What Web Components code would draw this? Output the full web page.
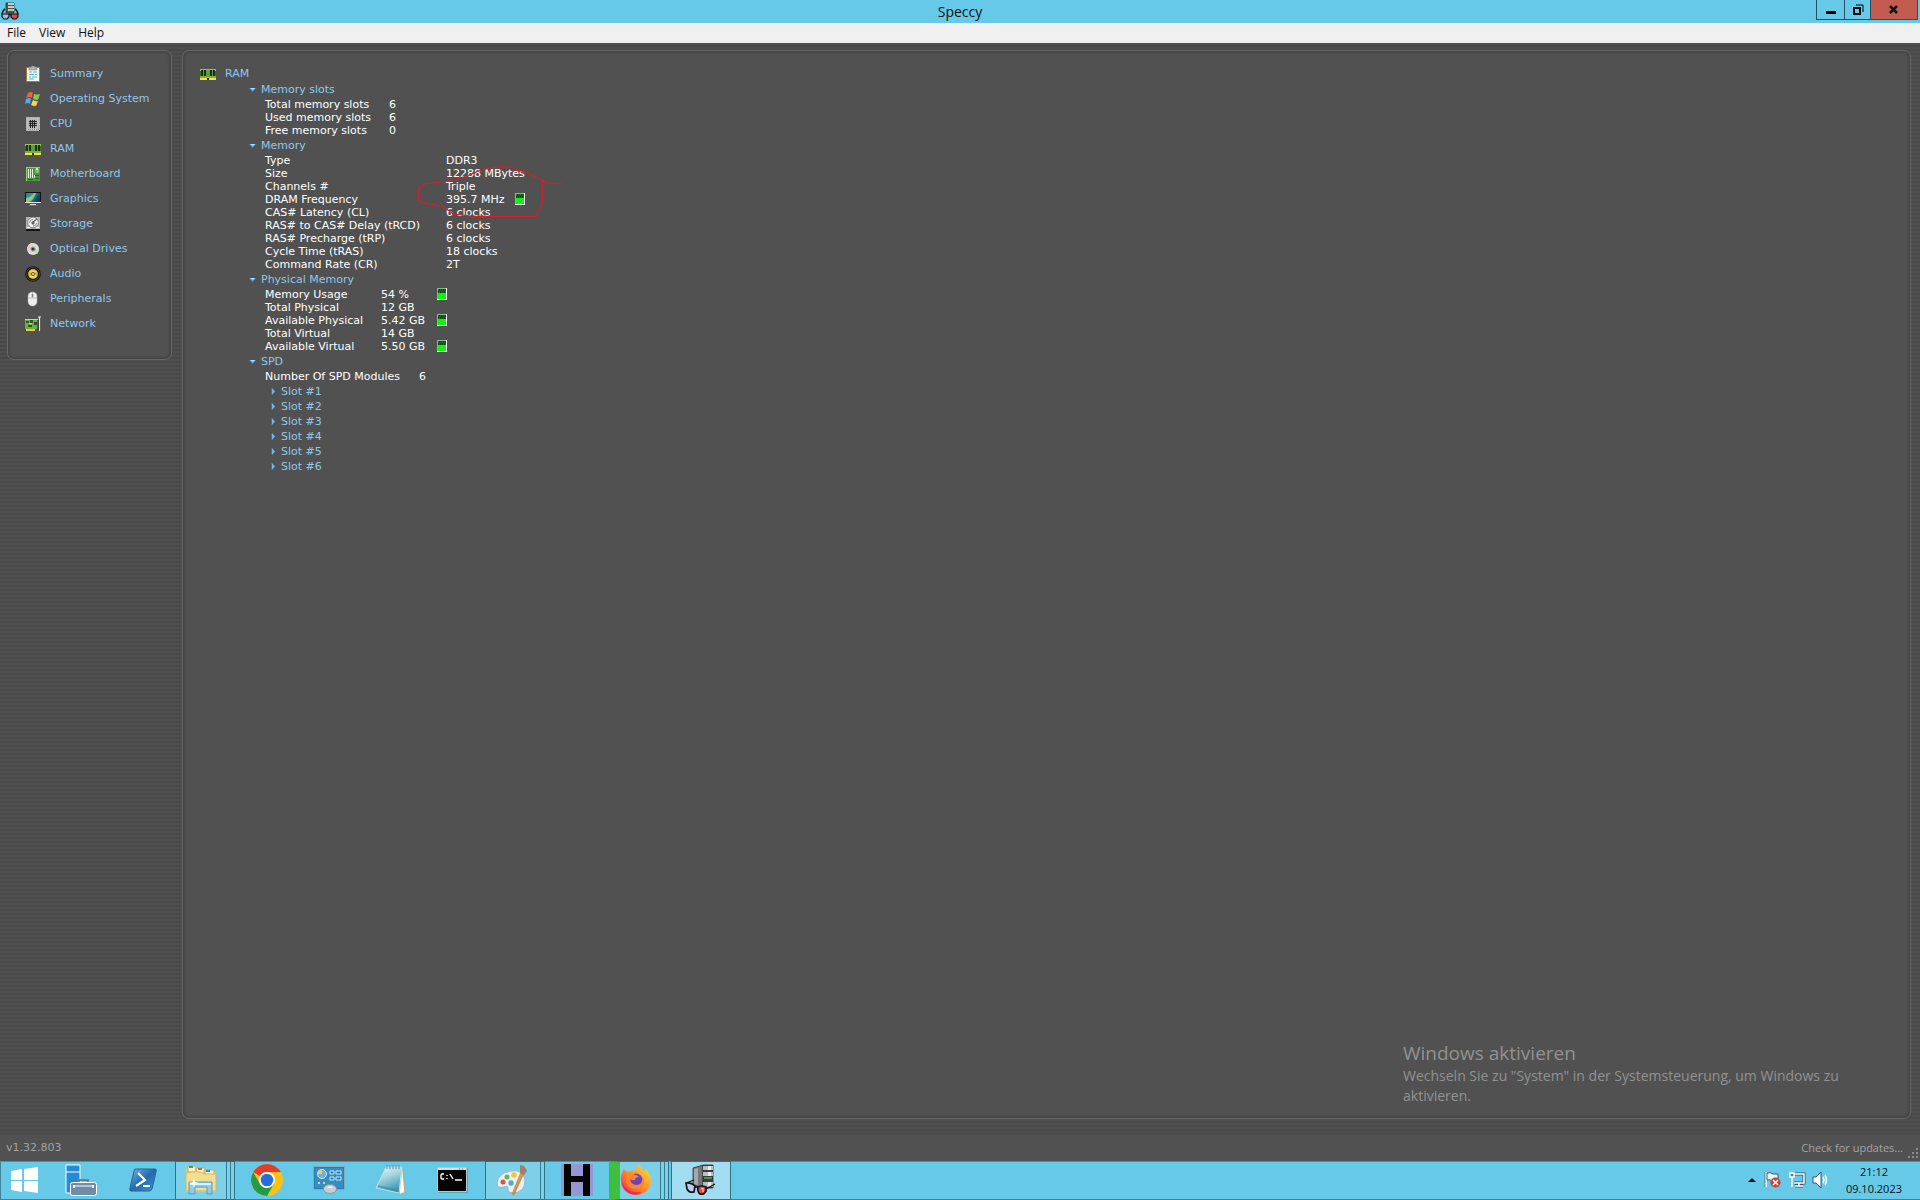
<!DOCTYPE html>
<html lang="en">
<head>
<meta charset="utf-8">
<title>Speccy</title>
<style>
  html, body { height: 100%; margin: 0; }
  body { overflow: hidden; background: #515151; }
</style>
</head>
<body>
<speccy-desktop></speccy-desktop>
<script>
const UI = '"Open Sans", "Noto Sans", sans-serif';
const VERDANA = '"DejaVu Sans", Verdana, sans-serif';

const svg = (w, h, body, vb) => `<svg width="${w}" height="${h}" viewBox="${vb || `0 0 ${w} ${h}`}" aria-hidden="true">${body}</svg>`;

const ICONS = {
  speccy: svg(18, 18, `<path d="M5 1h8v10H5z" fill="#4f5753" stroke="#27302c" stroke-width=".8"/><path d="M7 1h6v2H7zM7 4h6v2H7zM7 7h6v2H7z" fill="#c9d1cb"/><path d="M8 8h4" stroke="#76c276" stroke-width=".8"/><path d="M4 7q-2 1-3 5m13-5q2 1 3 5" stroke="#111" stroke-width="1.400" fill="none"/><path d="M1 12h7v3l-2 2H3l-2-2z" fill="#9fb9e6" stroke="#111" stroke-width="1.200"/><path d="M10 12h7v3l-2 2h-3l-2-2z" fill="#e0483f" stroke="#111" stroke-width="1.200"/><path d="M8 12.500h2" stroke="#111" stroke-width="1.500"/>`),
  speccyBig: svg(34, 32, `<path d="M9 4 19 1v23L9 21z" fill="#73777a" stroke="#2b2e30" stroke-width=".8"/><path d="M10 5 14 4v17l-4-1z" fill="#a5a8aa"/><path d="M19 1h10v23H19z" fill="#3b3e40" stroke="#2b2e30" stroke-width=".8"/><path d="M19 2h10v4H19zM19 8h10v4H19zM19 18h10v5H19z" fill="#b9bdbf"/><path d="M24 2h3v4h-3zM24 8h3v4h-3zM24 18h3v4h-3z" fill="#ececec"/><path d="M20 14h8" stroke="#5cc46a" stroke-width="1.200"/><path d="M2 19 10 16M22 25l9-5" stroke="#151515" stroke-width="1.300" fill="none"/><path d="M2 19q5-1 9 3l-1 6q-5 1-7-3z" fill="#b9cdf2" stroke="#151515" stroke-width="1.700"/><path d="M14 23q4-2 8 0v4q-2 4-6 3-3-2-2-7z" fill="#e24c46" stroke="#151515" stroke-width="1.700"/><path d="M11 23h3" stroke="#151515" stroke-width="1.600"/><path d="m17 25 2-1v4" stroke="#ffd4d0" fill="none"/>`),
  summary: svg(16, 16, `<path d="M1 1h14v15H1z" fill="#b86e43"/><path d="M2 2h12v13H2z" fill="#f8fbfa"/><path d="M4 1h2l1-1h2l1 1h2v3H4z" fill="#aeb3b4" stroke="#777" stroke-width=".5"/><path d="M4 6h3m1 0h4M4 8.500h5m1 0h2M4 11h2m1 0h5M4 13h5" stroke="#45b7c2"/>`),
  os: svg(16, 16, `<path d="M3 2Q6 0 8 2L7 7Q4 5 1 7z" fill="#ea653e"/><path d="M9 3q3 1 6 0l-2 6q-3 1-5-1z" fill="#8ac948"/><path d="M1 8q3-2 5 0l-1 5q-2-2-5 0z" fill="#55a8ec"/><path d="M8 9q3 2 5 1l-2 5q-3 1-5-1z" fill="#fbd84e"/><path d="m8 2-1 5m1 1q3 2 5 1M6 14q3 2 5 1" stroke="#7d3320" stroke-opacity=".45" fill="none"/>`),
  cpu: svg(16, 16, `<path d="M1 1h14v14H1z" fill="#8d8d8d"/><path d="M2 3h12M2 5h12M2 7h12M2 9h12M2 11h12M2 13h12" stroke="#f4f4f4" stroke-width="1" stroke-dasharray="1 1"/><path d="M3 2h12M3 4h12M3 6h12M3 8h12M3 10h12M3 12h12" stroke="#e0e0e0" stroke-width="1" stroke-dasharray="1 1"/><path d="M4 4h8v8H4z" fill="#b4b4b4"/><path d="M5.500 4v8m2-8v8m2-8v8M4 5.500h8M4 7.500h8M4 9.500h8" stroke="#252525"/><path d="M1.500 1.500h13v13h-13z" fill="none" stroke="#b4b4b4"/><path d="M14 14h1v1h-1z" fill="#111"/>`),
  ram: svg(16, 16, `<path d="M0 3h16v11H0z" fill="#3d7026"/><path d="M0 3h16v2H0z" fill="#91c647"/><path d="M1 4h2v6H1zM4 4h2v6H4zM10 4h2v6h-2zM13 4h2v6h-2z" fill="#1e2c1a"/><path d="M3 4h1v6H3zM6 4h4v6H6zM12 4h1v6h-1z" fill="#5f9a44"/><path d="M0 10h16v2H0z" fill="#7cb52d"/><path d="M0 12h16v2H0z" fill="#eee34b"/><path d="M7 12h2v2H7z" fill="#383610"/>`),
  board: svg(16, 16, `<path d="M1 1h14v14H1z" fill="#4d9440"/><path d="M1 1h14v1H1zM1 1h1v14H1z" fill="#9acb7c"/><path d="M3.500 3v9m2-9v9m2-9v9" stroke="#e8f6df"/><path d="M10 3h4v4h-4z" fill="#83bd63"/><path d="M10 9.500h4M10 12.500h4M3 13.500h5" stroke="#25642a"/><path d="M11 2h2v2h-2zM9 9h1v3H9z" fill="#d5ebbd"/>`),
  graphics: svg(16, 16, `<defs><linearGradient id="g" x2="1" y2=".4"><stop stop-color="#237c8e"/><stop offset=".45" stop-color="#2da5a5"/><stop offset=".7" stop-color="#147083"/><stop offset="1" stop-color="#103d67"/></linearGradient></defs><path d="M0 1h16v11H0z" fill="#111"/><path d="M1 2h14v9H1z" fill="url(#g)"/><path d="M1 11V7q5 0 8-5h2Q9 9 4 11z" fill="#cfd96d" opacity=".7"/><path d="M0 11h16v1H0zM5 13h6v1H5z" fill="#e4e4e4"/><path d="M3 14h10v1H3z" fill="#292"/>`),
  storage: svg(16, 16, `<path d="M1 1h14v14H1z" fill="#b5b5b5"/><path d="M1 13h14v2H1z" fill="#151515"/><circle cx="8" cy="6.500" r="5.300" fill="#f2f2f2" stroke="#808080"/><path d="M4.500 7q0-3.500 3.500-3.500M11.500 7q0 3-3.500 3" stroke="#8a8a8a" fill="none"/><circle cx="8" cy="7" r="1.700" fill="#666"/><path d="m8 6 4-3" stroke="#5a5a5a" stroke-width="1.200"/><path d="M2 11h3v1H2zm9 0h3v1h-3z" fill="#f4f4f4"/>`),
  optical: svg(16, 16, `<circle cx="8" cy="8" r="6" fill="#dedede"/><path d="m8 8-6 0a6 6 0 0 1 2-4z" fill="#edc0dc"/><path d="M8 8 4 3.500a6 6 0 0 1 3-1.500z" fill="#dbe69f"/><path d="m8 8 6 1a6 6 0 0 1-2 4z" fill="#b6deb8"/><circle cx="8" cy="8" r="2.700" fill="#aaa"/><circle cx="8" cy="8" r="1.600" fill="#353535"/>`),
  audio: svg(16, 16, `<circle cx="8" cy="8" r="7.800" fill="#171410"/><circle cx="8" cy="8" r="6.500" fill="none" stroke="#6a5827" stroke-width=".7"/><circle cx="8" cy="8" r="5" fill="#cfad3a"/><path d="M4 6a5 5 0 0 1 8 0L9 8H7zM4 10a5 5 0 0 0 8 0L9 8H7z" fill="#eadb73"/><circle cx="8" cy="8" r="2" fill="#68521a"/><circle cx="8" cy="8" r="1" fill="#fff2aa"/>`),
  mouse: svg(16, 16, `<rect x="3" y="1" width="9" height="14" rx="4.500" fill="#f0f0f0" stroke="#b7b7b7" stroke-width=".5"/><path d="M3 7h9M7.500 1v6" stroke="#aaa" stroke-width=".8"/><rect x="6.500" y="3" width="2" height="3" rx="1" fill="#868686"/>`),
  network: svg(16, 16, `<path d="M0 3h13v10H0z" fill="#6ead42"/><path d="M1 5h3v2H1zM5 4h3v3H5zM9 6h3v3H9zM3 9h4v2H3z" fill="#2c5723"/><path d="M0 3h13v1H0zM4 7h3v1H4z" fill="#badf91"/><path d="M1 13h9v2H1z" fill="#e2cb48"/><path d="M13 1h3M14.500 1v14" stroke="#e9e9e9" stroke-width="1.200"/><path d="M13 4v10" stroke="#222"/>`),
  start: svg(28, 26, `<path d="m0 4 11-2v11H0zM13 2l14-2v13H13zM0 14h11v11L0 23zM13 14h14v12l-14-2z" fill="#fff"/>`),
  server: svg(32, 32, `<path d="M1 1h14v28H1z" fill="#238bd8" stroke="#fff"/><path d="M1 8h14" stroke="#fff"/><path d="M14 18v-2h9v2" fill="none" stroke="#64849c" stroke-width="2"/><rect x="5.500" y="18.500" width="26" height="13" rx="2" fill="#6f8ea6" stroke="#fff"/><path d="M9 22h19" stroke="#fff"/><path d="M9 21v3m19-3v3" stroke="#fff" stroke-width="2"/>`),
  powershell: svg(28, 24, `<defs><linearGradient id="ps" x2="1" y2="1"><stop stop-color="#78b7e0"/><stop offset=".5" stop-color="#246bad"/><stop offset="1" stop-color="#3b99d3"/></linearGradient></defs><path d="M6 1h20q2 0 1 3l-4 17q-1 2-3 2H2q-2 0-1-3L5 3z" fill="url(#ps)" stroke="#246491"/><path d="m9 5 7 7-9 6m7 0h7" fill="none" stroke="#fff" stroke-width="2.200"/>`),
  explorer: svg(34, 30, `<path d="M2 4h10l2 3h17v20H2z" fill="#e6cc70"/><path d="M4 1h8v6H4zM12 3h9v6h-9zM20 5h10v6H20z" fill="#faf2cc" stroke="#c9a955"/><path d="M5 1h4v2H5z" fill="#36a852"/><path d="M14 3h4v2h-4z" fill="#d5653d"/><path d="M22 5h4v2h-4z" fill="#398bb1"/><path d="M2 8q14-3 18 1h12v17H2z" fill="#f1df91" stroke="#d6b85f"/><path d="M5 17h23v12h-5v-7H11v7H5z" fill="#8ecbe9" fill-opacity=".9" stroke="#549cc5"/><path d="M6 18h21v2H6z" fill="#d8f2fc"/><path d="m10 13 1 4 4 1-4 1-1 4-1-4-4-1 4-1z" fill="#fff"/>`),
  chrome: svg(32, 32, `<circle cx="16" cy="16" r="16" fill="#fbc116"/><path d="M2.200 8A16 16 0 0 1 29.900 8H16a8 8 0 0 0-7 4z" fill="#e33b2e"/><path d="M2.200 8A16 16 0 0 0 16 32l7-12-7 4a8 8 0 0 1-7-4z" fill="#249c45"/><circle cx="16" cy="16" r="8" fill="#fff"/><circle cx="16" cy="16" r="6.300" fill="#286edb"/>`),
  control: svg(32, 28, `<rect x=".5" y=".5" width="31" height="23" fill="#267fba" stroke="#83acc1"/><path d="M2 2h28v20H2z" fill="#338ec4"/><circle cx="9" cy="8" r="4.500" fill="#68b5d9" stroke="#d3f1ff"/><path d="M9 8V3a5 5 0 0 0-5 5z" fill="#f4c76f"/><path d="M17 5h4v3h-4zM23 5h5v3h-5zM17 11h4v3h-4zM23 11h5v3h-5z" fill="#2479ad" stroke="#c8ecfb"/><path d="M5 16h2v2H5zM10 16h2v2h-2z" fill="#ffc463"/><ellipse cx="17" cy="23" rx="6.500" ry="4.500" fill="#c8ced3" stroke="#8395a0"/><path d="M14 22q3-4 6 0" fill="#f1f3f4"/>`),
  notepad: svg(32, 30, `<defs><linearGradient id="n" x2=".4" y2="1"><stop stop-color="#e3f2f4"/><stop offset=".45" stop-color="#a9d8e2"/><stop offset="1" stop-color="#4098b2"/></linearGradient></defs><path d="m10 3 18 2 2 23-4 1z" fill="#ebe1bb" stroke="#b4ad8b"/><path d="m27 7 2 19-4 3z" fill="#fff"/><path d="M11 2h16l-3 26L1 23z" fill="url(#n)" stroke="#b1e4ed"/><path d="m3 21 21 5" stroke="#3889a2"/><path d="M12 0v4m3-4v4m3-4v4m3-4v4m3-4v4" stroke="#6f8a94"/>`),
  cmd: svg(32, 26, `<path d="M1 1h30v25H1z" fill="#3e626d" opacity=".35"/><path d="M.5.500h29v24H.500z" fill="#050505" stroke="#bbc5cb"/><path d="M1 1h28v2H1z" fill="#ddd"/><path d="M22 2h1m2 0h1" stroke="#567"/><path d="M7 7H5q-1 0-1 2v2q0 1 1 1h2M10 8v1m0 2v1M13 7l3 5m2 1h7" fill="none" stroke="#fff" stroke-width="1.400"/>`),
  paint: svg(34, 31, `<path d="M15 6q12-2 14 9 0 13-13 13-5-1-4-5 0-3-4-1-7 2-7-4Q2 8 15 6z" fill="#e7f0f3" stroke="#98b7c4"/><circle cx="7" cy="17" r="2.500" fill="#e05146"/><circle cx="11" cy="12" r="2.500" fill="#69b354"/><circle cx="18" cy="10" r="2.700" fill="#f5c43d"/><circle cx="15" cy="18" r="2.700" fill="#53a7d1"/><path d="m25 7 3 1-10 22-2-1z" fill="#dc9749" stroke="#a86933" stroke-width=".5"/><path d="M24 0q5 0 7 6l-3 4-4-2z" fill="#9f8065"/>`),
  hblock: svg(32, 32, `<path d="M0 0h32v32H0z" fill="#9696d3"/><path d="M3 0h7v12h12V0h7v32h-7V18H10v14H3z" fill="#050505"/>`),
  firefox: svg(32, 32, `<defs><linearGradient id="ff" x1="1" x2="0" y2="1"><stop stop-color="#ffe53c"/><stop offset=".5" stop-color="#ff9028"/><stop offset="1" stop-color="#ed2353"/></linearGradient></defs><path d="M4 5q2 3 5 3 2-2 5-2l-1 3q4-5 5-9 4 3 5 8l3-3q5 6 5 12A15 14 0 0 1 1 17Q0 11 4 5z" fill="url(#ff)"/><circle cx="16" cy="16" r="6.500" fill="#6b42bc"/><path d="M8 10q4-2 7 1 3 0 4 2-4 0-4 3-3 1-5-1 1 6 7 6 6-1 6-8 4 10-6 12-11 0-11-10z" fill="#ff852c"/><path d="M2 17q4 13 20 11-4 4-11 2Q2 26 2 17z" fill="#e52066" opacity=".7"/>`),
  flag: svg(18, 18, `<path d="M2 1v15" stroke="#fff" stroke-width="2"/><path d="M1 1v15" stroke="#315d6a" stroke-width=".7"/><path d="M3 2q4-1 6 1h5v7H8Q6 8 3 9z" fill="#e9f5f8" stroke="#315d6a"/><circle cx="11.500" cy="11.500" r="5" fill="#cf3c32"/><path d="m9 9 5 5m0-5-5 5" stroke="#fff" stroke-width="1.700"/>`),
  net: svg(18, 18, `<path d="M5 3h11v9H6M11 12v3m-4 0h8" fill="none" stroke="#28586b" stroke-width="3"/><path d="M5 3h11v9H6M11 12v3m-4 0h8" fill="none" stroke="#fff" stroke-width="1.500"/><path d="M2 2h4v4H2zM4 6v10" fill="#438399" stroke="#fff" stroke-width="1.400"/>`),
  sound: svg(18, 18, `<path d="M1 6h3l5-5v16l-5-5H1z" fill="#fff" stroke="#28586b"/><path d="M11 6q2 3 0 6m2-8q3 5 0 10" fill="none" stroke="#fff" stroke-width="1.500"/>`),
};

const define = (name, template) => customElements.define(name, class extends HTMLElement {
  constructor() {
    super();
    this.attachShadow({ mode: 'open' });
  }
  connectedCallback() {
    if (this.shadowRoot.childNodes.length) return;
    const t = document.createElement('template');
    const html = typeof template === 'function' ? template(this) : template;
    t.innerHTML = '<style>*{box-sizing:border-box}svg{display:block;flex:none}button{font:inherit;color:inherit;background:none;border:0;margin:0;padding:0}a{color:inherit;text-decoration:none}</style>' + html;
    this.shadowRoot.append(t.content.cloneNode(true));
  }
});

define('ui-icon', el => `<style>:host{display:block;flex:none}</style>${ICONS[el.getAttribute('name')]}`);

define('title-bar', `<style>
  :host{display:grid;grid-template-columns:1fr auto 1fr;height:23px;background:#66c9e8;font:14px/23px ${UI};color:#111}
  .app{padding:2px 1px}
  h1{margin:0;font:inherit}
  .controls{display:flex;justify-self:end;height:20px;margin-right:2px;border:1px solid #22525f;border-top:0}
  button{display:grid;place-items:center;width:28px;border-right:1px solid #22525f}
  button:nth-child(2){width:26px}
  .close{width:46px;background:#c35b50;border:0}
  </style>
  <div class="app"><ui-icon name="speccy"></ui-icon></div><h1>Speccy</h1>
  <div class="controls">
    <button aria-label="Minimize">${svg(12, 12, '<path d="M1 7h10v3H1z" fill="#000"/>')}</button>
    <button aria-label="Restore">${svg(12, 12, '<path d="M2 4h6v6H2z" fill="none" stroke="#000" stroke-width="2"/><path d="M4 1h7v7" fill="none" stroke="#000"/>')}</button>
    <button class="close" aria-label="Close">${svg(12, 12, '<path d="m2 2 7 7m0-7-7 7" stroke="#111" stroke-width="2.500"/>')}</button>
  </div>`);

define('menu-bar', `<style>
  :host{display:flex;gap:13px;height:20px;padding-left:7px;background:#f0f0f0;font:12px/20px ${UI};color:#111}
  </style><button>File</button><button>View</button><button>Help</button>`);

define('inset-panel', `<style>
  :host{display:block;position:relative;border:1px solid #686868;border-radius:7px;background:#515151;box-shadow:inset 0 0 3px 1px #3e3e3e}
  </style><slot></slot>`);

define('nav-item', el => `<style>
  :host{display:block}
  a{display:flex;align-items:center;gap:9px;height:25px}
  </style><a href="#${el.getAttribute('icon')}"><ui-icon name="${el.getAttribute('icon')}"></ui-icon><slot></slot></a>`);

define('side-nav', `<style>
  :host{display:block}
  nav{padding:10px 17px 23px;color:#8fc8ec;font:11px/14px ${VERDANA};white-space:nowrap}
  </style><nav>
  <nav-item icon="summary">Summary</nav-item>
  <nav-item icon="os">Operating System</nav-item>
  <nav-item icon="cpu">CPU</nav-item>
  <nav-item icon="ram">RAM</nav-item>
  <nav-item icon="board">Motherboard</nav-item>
  <nav-item icon="graphics">Graphics</nav-item>
  <nav-item icon="storage">Storage</nav-item>
  <nav-item icon="optical">Optical Drives</nav-item>
  <nav-item icon="audio">Audio</nav-item>
  <nav-item icon="mouse">Peripherals</nav-item>
  <nav-item icon="network">Network</nav-item>
  </nav>`);

define('level-meter', `<style>:host{display:inline-block;height:12px;vertical-align:top}</style>
  ${svg(10, 12, '<path d="M0 0h10v12H0z" fill="#fff"/><path d="M0 0h9v11H0z" fill="#8db58d"/><path d="M1 1h8v4H1z" fill="#17691d"/><path d="M2 2h1m1 0h1m1 0h1m1 0h1M1 4h1m1 0h1m1 0h1m1 0h1" stroke="#062b0a"/><path d="M1 5h8v6H1z" fill="#12f012"/>')}`);

define('tree-toggle', el => `<style>
  :host{display:block}
  button{display:flex;align-items:center;height:15px;gap:5px;color:#8fc8ec}
  </style><button aria-expanded="${el.hasAttribute('open')}">${el.hasAttribute('open')
    ? svg(7, 7, '<path d="M0 2h7L3.500 6z" fill="#3e9de4"/><path d="M1 2h5L4 4z" fill="#b5e3ff"/>')
    : svg(7, 7, '<path d="M3 0v7l3-3.500z" fill="#67b9ef"/><path d="M2 0h1v7H2z" fill="#2676b9"/>')}<span><slot></slot></span></button>`);

define('fact-table', el => {
  const meter = el.hasAttribute('aligned');
  const rows = el.getAttribute('rows').split('|').map(r => {
    const [k, v, m] = r.split('=');
    return `<tr><th scope="row">${k}</th><td class="v">${v}${m && !meter ? '<level-meter class="inline"></level-meter>' : ''}</td>${meter ? `<td>${m ? '<level-meter></level-meter>' : ''}</td>` : ''}</tr>`;
  }).join('');
  return `<style>
  :host{display:block;padding:1px 0 1px 16px;color:#fff}
  table{border-collapse:collapse;table-layout:fixed}
  tr{height:13px}
  th,td{padding:0;font-weight:400;text-align:left;line-height:13px;height:13px;white-space:nowrap;vertical-align:top}
  th{width:var(--label,124px)}
  .v{width:56px}
  .inline{margin-left:10px}
  </style><table>${rows}</table>`;
});

define('red-markup', `<style>:host{position:absolute;left:7px;top:9px;pointer-events:none}</style>
  ${svg(390, 220, '<path d="m1115 371-45-2-13-9-52-23-40-15-35-2-50 8-50 20-50 14-75 10-20 14v36l15 6 60 12 30 22 60 7h188l19-37v-72" fill="none" stroke="#d51f2b" stroke-width="3.500" stroke-linejoin="round"/>', '0 0 1170 660')}`);

define('ram-report', `<style>
  :host{display:block;padding:14px 17px;font:11px/13px ${VERDANA};color:#fff}
  header{display:flex;align-items:center;gap:9px;height:17px;color:#8fc8ec}
  h2{margin:0;font:inherit}
  .tree{padding-left:49px}
  .slots{padding-left:20px}
  </style>
  <header><ui-icon name="ram"></ui-icon><h2>RAM</h2></header>
  <div class="tree">
    <tree-toggle open>Memory slots</tree-toggle>
    <fact-table rows="Total memory slots=6|Used memory slots=6|Free memory slots=0"></fact-table>
    <tree-toggle open>Memory</tree-toggle>
    <fact-table style="--label:181px" rows="Type=DDR3|Size=12288 MBytes|Channels #=Triple|DRAM Frequency=395.7 MHz=1|CAS# Latency (CL)=6 clocks|RAS# to CAS# Delay (tRCD)=6 clocks|RAS# Precharge (tRP)=6 clocks|Cycle Time (tRAS)=18 clocks|Command Rate (CR)=2T"></fact-table>
    <tree-toggle open>Physical Memory</tree-toggle>
    <fact-table aligned style="--label:116px" rows="Memory Usage=54 %=1|Total Physical=12 GB|Available Physical=5.42 GB=1|Total Virtual=14 GB|Available Virtual=5.50 GB=1"></fact-table>
    <tree-toggle open>SPD</tree-toggle>
    <fact-table style="--label:154px" rows="Number Of SPD Modules=6"></fact-table>
    <div class="slots">${[1, 2, 3, 4, 5, 6].map(n => `<tree-toggle>Slot #${n}</tree-toggle>`).join('')}</div>
  </div>
  <red-markup></red-markup>`);

define('activation-note', `<style>
  :host{position:absolute;right:23px;bottom:12px;width:484px;color:#929292;font:14px/20px ${UI}}
  h2{margin:0;font:19px/26px ${UI}}
  p{margin:0;width:450px}
  </style><h2>Windows aktivieren</h2><p>Wechseln Sie zu "System" in der Systemsteuerung, um Windows zu aktivieren.</p>`);

define('status-bar', `<style>
  :host{display:flex;justify-content:space-between;align-items:center;height:26px;padding:0 1px 0 6px;background:#515151;color:#a3a3a3;font:11px/24px ${VERDANA}}
  .right{display:flex;gap:4px;font-family:${UI};line-height:22px}
  svg{align-self:flex-end}
  </style><span>v1.32.803</span><div class="right"><a href="#update">Check for updates...</a>
  ${svg(12, 12, '<path d="M9 1h2v2H9zM5 5h2v2H5zM9 5h2v2H9zM1 9h2v2H1zM5 9h2v2H5zM9 9h2v2H9z" fill="#8b8b8b"/>')}</div>`);

define('task-button', el => {
  const n = +el.getAttribute('stack') || 0;
  return `<style>
  :host{display:block;width:60px;height:39px;flex:none}
  button{display:flex;width:100%;height:100%;border:1px solid transparent}
  .face{flex:1;display:grid;place-items:center;padding-bottom:1px}
  i{width:4px;border-left:1px solid #357b90}
  :host([open]) button{border-color:#2f7185;background:#7dd0ea}
  :host([active]) button{background:#a2dcf0}
  :host([progress]) button{border-left:11px solid #3fbf40}
  :host([progress]) .face{justify-content:start}
  </style><button aria-label="${el.getAttribute('icon')}"><span class="face"><ui-icon name="${el.getAttribute('icon')}"></ui-icon></span>${'<i></i>'.repeat(n)}</button>`;
});

define('task-bar', `<style>
  :host{display:flex;justify-content:space-between;height:39px;background:#66c9e8;box-shadow:inset 0 1px #4893aa,inset 0 -1px #3f8398,inset 1px 0 #3f8398;font:11px/17px ${UI};color:#111}
  .apps{display:flex;gap:2px}
  .start{width:49px;display:grid;place-items:center;padding-bottom:1px}
  .tray{display:flex;align-items:center;gap:6px;padding:0 18px 2px 0}
  .more{margin-right:2px}
  time{text-align:center;margin-left:10px}
  time span{display:block}
  </style>
  <div class="apps">
    <button class="start" aria-label="Start"><ui-icon name="start"></ui-icon></button>
    <task-button icon="server"></task-button>
    <task-button icon="powershell"></task-button>
    <task-button icon="explorer" open stack="2"></task-button>
    <task-button icon="chrome"></task-button>
    <task-button icon="control"></task-button>
    <task-button icon="notepad"></task-button>
    <task-button icon="cmd"></task-button>
    <task-button icon="paint" open stack="1"></task-button>
    <task-button icon="hblock"></task-button>
    <task-button icon="firefox" open progress stack="2"></task-button>
    <task-button icon="speccyBig" open active></task-button>
  </div>
  <div class="tray">
    <button class="more" aria-label="Show hidden icons">${svg(8, 5, '<path d="m0 5 4-4 4 4z" fill="#111"/>')}</button>
    <ui-icon name="flag"></ui-icon><ui-icon name="net"></ui-icon><ui-icon name="sound"></ui-icon>
    <time datetime="2023-10-09T21:12"><span>21:12</span><span>09.10.2023</span></time>
  </div>`);

define('speccy-desktop', `<style>
  :host{display:flex;flex-direction:column;height:100vh}
  main{flex:1;min-height:0;display:flex;align-items:stretch;gap:10px;padding:7px 9px 16px 7px;background:repeating-linear-gradient(#4f4f4f 0 2px,#494949 2px 4px)}
  .side{flex:none;width:165px;align-self:flex-start}
  .main{flex:1;min-width:0}
  </style>
  <title-bar></title-bar><menu-bar></menu-bar>
  <main>
    <inset-panel class="side"><side-nav></side-nav></inset-panel>
    <inset-panel class="main"><ram-report></ram-report><activation-note></activation-note></inset-panel>
  </main>
  <status-bar></status-bar><task-bar></task-bar>`);
</script>
</body>
</html>
